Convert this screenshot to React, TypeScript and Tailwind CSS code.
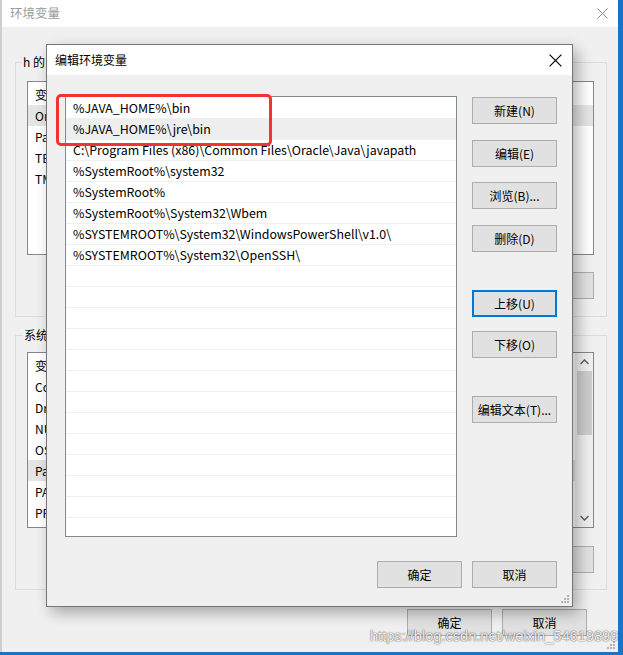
import { ReactNode } from 'react';
import { clsx } from 'clsx';

const ui = "font-['Noto_Sans_CJK_SC','Microsoft_YaHei',sans-serif]";

const pathRows = [
  '%JAVA_HOME%\\bin',
  '%JAVA_HOME%\\jre\\bin',
  'C:\\Program Files (x86)\\Common Files\\Oracle\\Java\\javapath',
  '%SystemRoot%\\system32',
  '%SystemRoot%',
  '%SystemRoot%\\System32\\Wbem',
  '%SYSTEMROOT%\\System32\\WindowsPowerShell\\v1.0\\',
  '%SYSTEMROOT%\\System32\\OpenSSH\\',
];

// only the names peek out from behind the dialog
const userVars = ['OneDrive', 'Path', 'TEMP', 'TMP'];
const systemVars = ['ComSpec', 'DriverData', 'NUMBER_OF_PROCESSORS', 'OS', 'Path', 'PATHEXT', 'PROCESSOR_ARCHITECTURE'];

function CloseIcon({ className, size = 11 }: { className?: string; size?: number }) {
  return (
    <svg width={size} height={size} viewBox="0 0 11 11" className={className}>
      <path d="M0.5 0.5 L10.5 10.5 M10.5 0.5 L0.5 10.5" stroke="currentColor" strokeWidth="1" fill="none" />
    </svg>
  );
}

function Grip({ className }: { className?: string }) {
  return (
    <svg width="8" height="8" viewBox="0 0 8 8" className={className}>
      <g fill="#b4b4b4">
        <rect x="6" y="0" width="2" height="2" />
        <rect x="3" y="3" width="2" height="2" />
        <rect x="6" y="3" width="2" height="2" />
        <rect x="0" y="6" width="2" height="2" />
        <rect x="3" y="6" width="2" height="2" />
        <rect x="6" y="6" width="2" height="2" />
      </g>
    </svg>
  );
}

function WinButton({
  children,
  focused,
  className,
}: {
  children: ReactNode;
  focused?: boolean;
  className?: string;
}) {
  return (
    <div
      className={clsx(
        'flex h-[27px] w-[85px] shrink-0 items-center justify-center bg-[#e1e1e1] text-[12px] text-black',
        focused ? 'border-2 border-[#0078d7]' : 'border border-[#adadad]',
        className
      )}>
      {children}
    </div>
  );
}

function VarList({ vars, selected, height, scroll }: { vars: string[]; selected: number; height: string; scroll?: boolean }) {
  return (
    <div className={clsx('flex border border-[#828790] bg-white', height)}>
      <div className="flex flex-1 flex-col pt-[2px] text-[12px]">
        <div className="flex h-[21px] items-center pl-[7px]">变量</div>
        {vars.map((name, idx) => (
          <div
            key={name}
            className={clsx('flex h-[21px] items-center pl-[7px]', idx === selected && 'bg-[#e5e5e5]')}>
            {name}
          </div>
        ))}
      </div>
      {scroll && (
        <div className="flex w-[18px] flex-col items-center bg-[#f0f0f0]">
          <div className="flex h-[18px] items-center justify-center">
            <svg width="9" height="6" viewBox="0 0 9 6">
              <path d="M0.5 5 L4.5 1 L8.5 5" stroke="#606060" strokeWidth="1.5" fill="none" />
            </svg>
          </div>
          <div className="h-[64px] w-[15px] bg-[#cdcdcd]" />
          <div className="flex-1" />
          <div className="flex h-[18px] items-center justify-center">
            <svg width="9" height="6" viewBox="0 0 9 6">
              <path d="M0.5 1 L4.5 5 L8.5 1" stroke="#606060" strokeWidth="1.5" fill="none" />
            </svg>
          </div>
        </div>
      )}
    </div>
  );
}

function BackgroundWindow() {
  return (
    <div className="absolute left-0 top-0 flex h-[652px] w-[618px] flex-col border-l-2 border-[#cfcfcf] bg-[#f0f0f0]">
      <div className="flex h-[27px] shrink-0 items-center justify-between bg-white pl-[8px] pr-[10px]">
        <span className="text-[12.5px] text-[#9a9a9a]">环境变量</span>
        <CloseIcon className="text-[#8a8a8a]" />
      </div>

      <div className="flex flex-col pl-[13px] pr-[11px]">
        <fieldset className="mt-[27px] border border-[#dcdcdc]">
          <legend className="ml-[6px] px-[1px] text-[12px] leading-[16px]">h 的</legend>
          <div className="flex flex-col pb-[17px] pl-[11px] pr-[12px] pt-[11px]">
            <VarList vars={userVars} selected={0} height="h-[174px]" />
            <div className="mt-[17px] flex justify-end gap-[10px]">
              <WinButton className="w-[75px]">新建(N)...</WinButton>
              <WinButton className="w-[75px]">编辑(E)...</WinButton>
              <WinButton className="w-[75px]">删除(D)</WinButton>
            </div>
          </div>
        </fieldset>

        <fieldset className="mt-[10px] border border-[#dcdcdc]">
          <legend className="ml-[7px] px-[1px] text-[12px] leading-[16px]">系统变量(S)</legend>
          <div className="flex flex-col pb-[16px] pl-[11px] pr-[12px] pt-[9px]">
            <VarList vars={systemVars} selected={4} height="h-[176px]" scroll />
            <div className="mt-[18px] flex justify-end gap-[10px]">
              <WinButton className="w-[75px]">新建(W)...</WinButton>
              <WinButton className="w-[75px]">编辑(I)...</WinButton>
              <WinButton className="w-[75px]">删除(L)</WinButton>
            </div>
          </div>
        </fieldset>

        <div className="mr-[20px] mt-[19px] flex justify-end gap-[10px]">
          <WinButton>确定</WinButton>
          <WinButton>取消</WinButton>
        </div>
      </div>
      <Grip className="absolute bottom-[3px] right-[3px]" />
    </div>
  );
}

function EditDialog() {
  const rows = [...pathRows, ...Array(13).fill('')];
  return (
    <div className="absolute left-[46px] top-[44px] flex h-[563px] w-[527px] flex-col border border-[#757575] bg-[#f0f0f0] shadow-[5px_6px_14px_rgba(0,0,0,0.3)]">
      <div className="flex h-[30px] shrink-0 items-center justify-between bg-white pl-[8px] pr-[10px]">
        <span className="text-[12px] text-black">编辑环境变量</span>
        <CloseIcon className="text-black" size={13} />
      </div>

      <div className="flex gap-[15px] pl-[18px] pt-[21px]">
        <div className="flex h-[441px] w-[392px] flex-col overflow-hidden border border-[#828790] bg-white pt-[1px]">
          {rows.map((row, idx) => (
            <div
              key={idx}
              className={clsx(
                'flex h-[21px] shrink-0 items-center border-b border-[#f0f0f0] pl-[7px] text-[12.4px] text-black',
                idx === 1 && 'bg-[#eeeeee]'
              )}>
              {row}
            </div>
          ))}
        </div>

        <div className="flex flex-col pt-[1px]">
          <WinButton>新建(N)</WinButton>
          <WinButton className="mt-[16px]">编辑(E)</WinButton>
          <WinButton className="mt-[15px]">浏览(B)...</WinButton>
          <WinButton className="mt-[16px]">删除(D)</WinButton>
          <WinButton className="mt-[38px]" focused>
            上移(U)
          </WinButton>
          <WinButton className="mt-[14px]">下移(O)</WinButton>
          <WinButton className="mt-[38px]">编辑文本(T)...</WinButton>
        </div>
      </div>

      <div className="mt-[24px] flex justify-end gap-[10px] pr-[15px]">
        <WinButton>确定</WinButton>
        <WinButton>取消</WinButton>
      </div>
      <Grip className="absolute bottom-[3px] right-[3px]" />
    </div>
  );
}

export default function App() {
  return (
    <div className={clsx('relative h-[655px] w-[623px] overflow-hidden bg-[#1a73c7]', ui)}>
      <BackgroundWindow />
      <EditDialog />

      {/* red annotation box */}
      <div className="absolute left-[56px] top-[94px] h-[52px] w-[216px] rounded-[5px] border-[3px] border-[#f43232]" />

      <div className="absolute left-[370px] top-[626px] font-['Liberation_Sans',sans-serif] text-[14.6px] text-white/90 [text-shadow:0_0_1px_rgba(0,0,0,0.7),0_0_2px_rgba(0,0,0,0.35)]">
        https://blog.csdn.net/weixin_54619899
      </div>
    </div>
  );
}
